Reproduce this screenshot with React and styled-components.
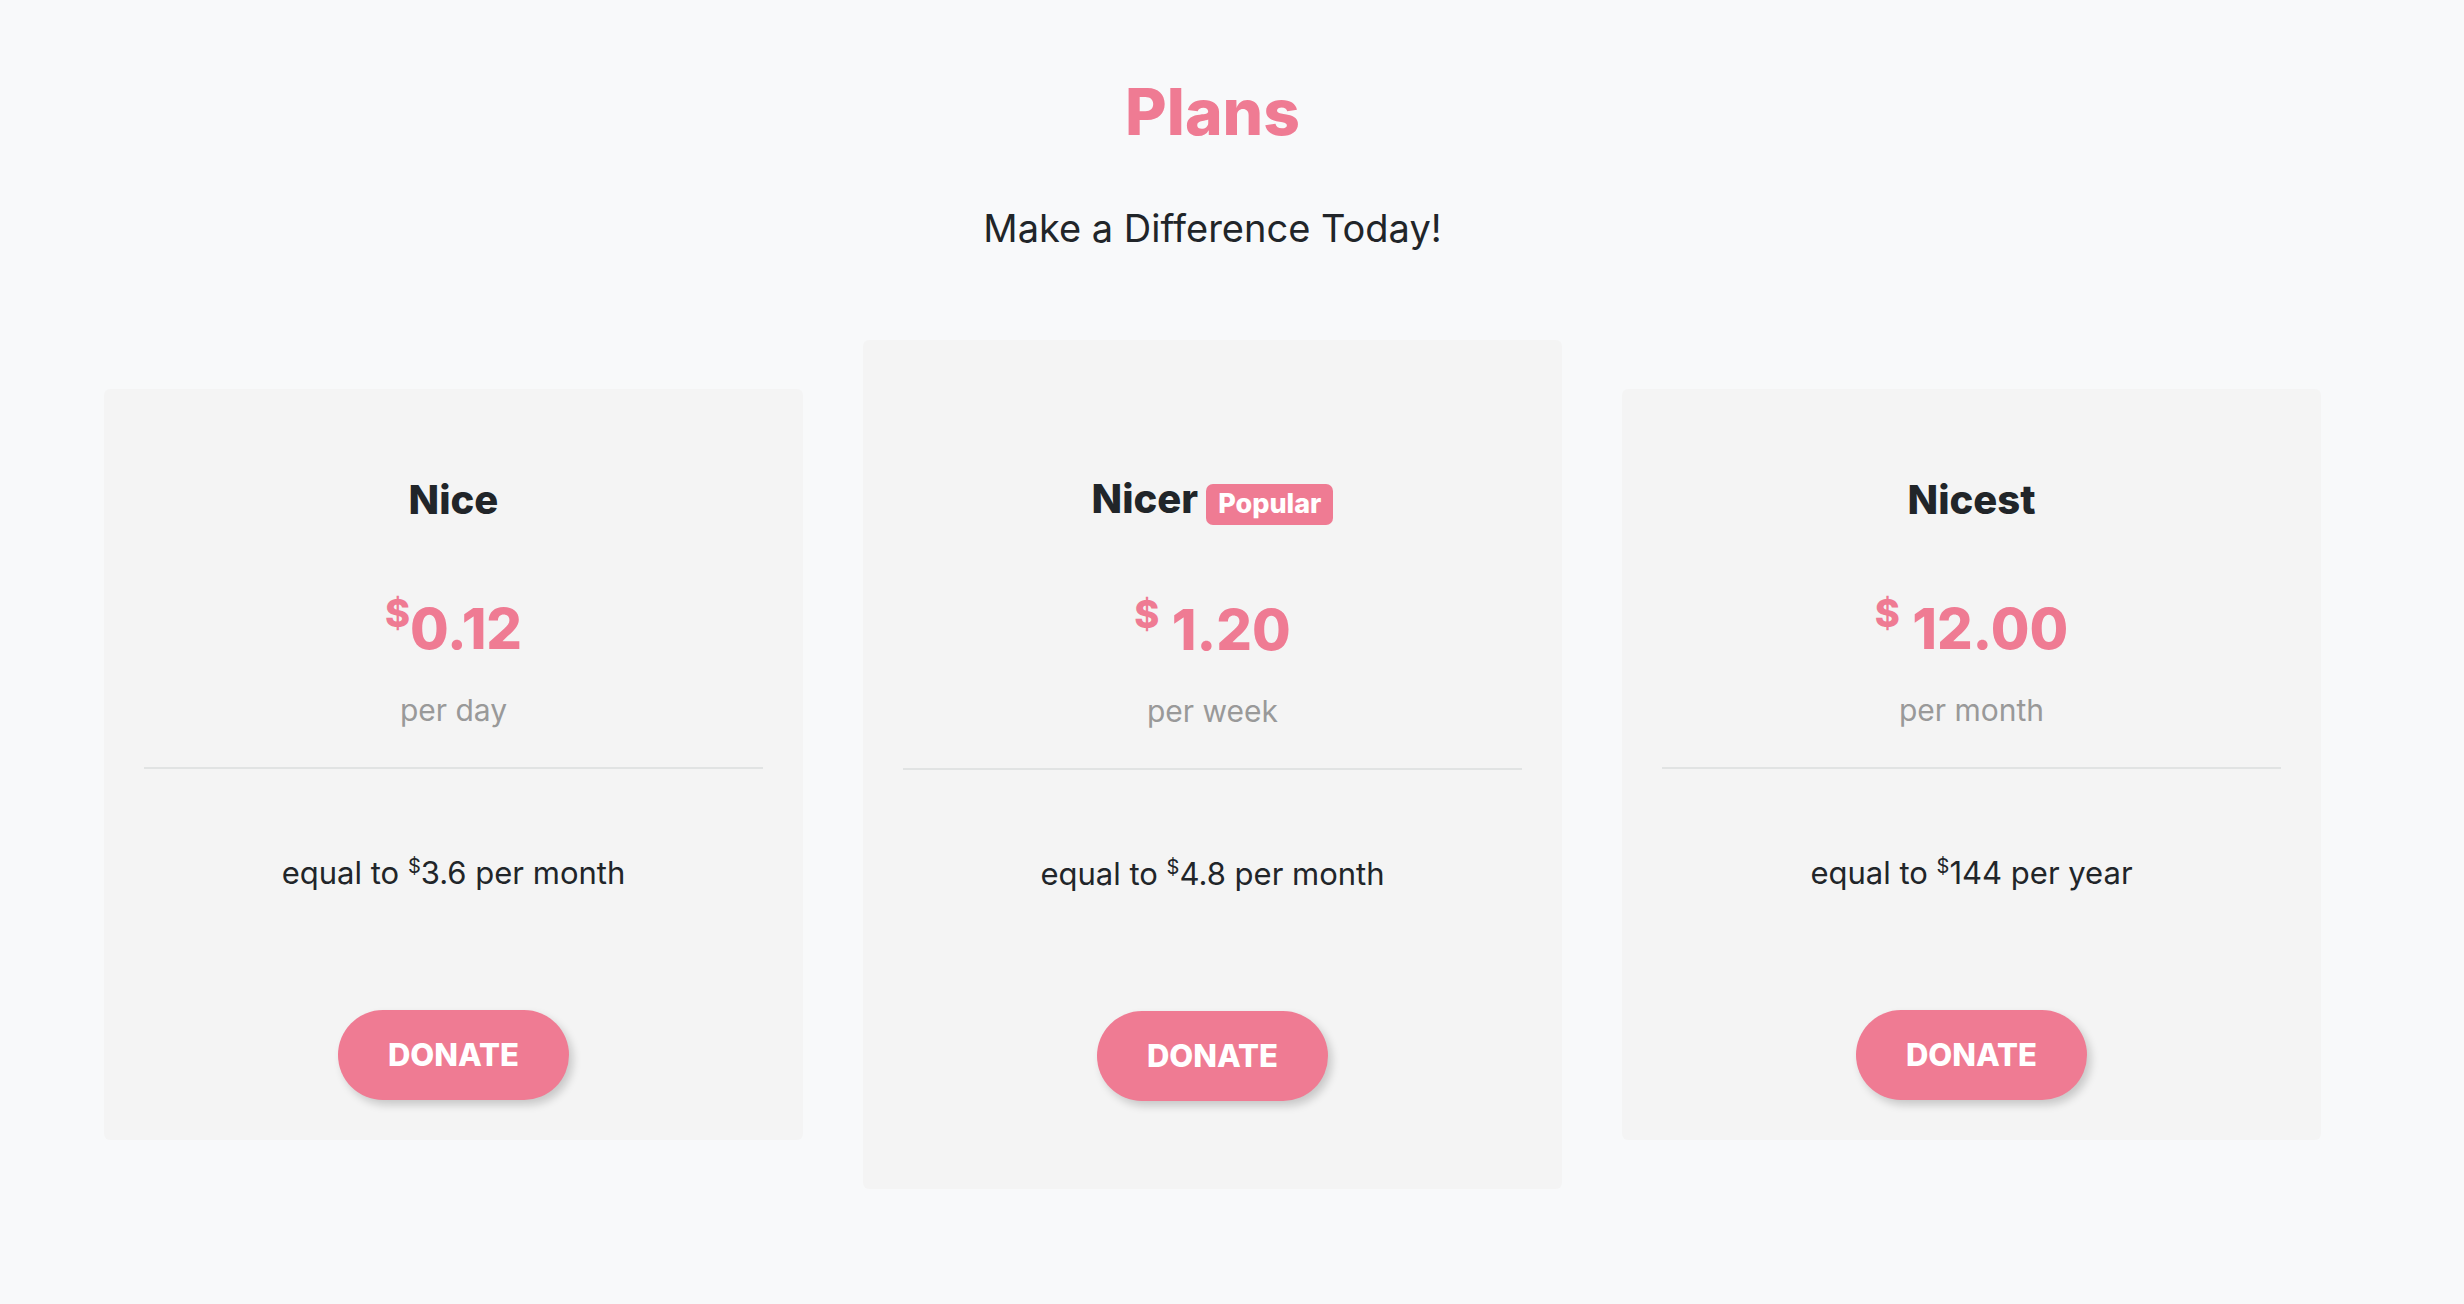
import React from 'react';
import styled, { createGlobalStyle } from 'styled-components';

const GlobalStyle = createGlobalStyle`
  * {
    box-sizing: border-box;
  }
  body {
    margin: 0;
    background: #f8f9fa;
    font-family: Inter, "Noto Sans", "Liberation Sans", sans-serif;
    color: #212529;
  }
`;

const Page = styled.div`
  padding: 74px 143px 80px 104px;
`;

const Title = styled.h1`
  margin: 0;
  text-align: center;
  font-size: 64px;
  line-height: 76.8px;
  font-weight: 800;
  color: #ef7b93;
`;

const Subtitle = styled.p`
  margin: 53px 0 0;
  text-align: center;
  font-size: 38px;
  line-height: 48px;
  font-weight: 400;
`;

const Plans = styled.div`
  display: grid;
  grid-template-columns: repeat(3, 1fr);
  gap: 60px;
  align-items: center;
  margin-top: 88px;
`;

const Card = styled.div`
  background: #f4f4f4;
  border-radius: 6px;
  text-align: center;
  padding: ${p => (p.$featured ? '135px 40px 88px' : '87px 40px 40px')};
`;

const Name = styled.h3`
  margin: 0;
  font-size: 40px;
  line-height: 48px;
  font-weight: 800;
  color: #212529;
`;

const Badge = styled.span`
  display: inline-block;
  margin-left: 8px;
  padding: 7px 12px 8px;
  border-radius: 7px;
  background: #ef7b93;
  color: #fff;
  font-size: 27px;
  line-height: 26px;
  font-weight: 800;
`;

const Price = styled.div`
  margin-top: 70px;
  font-size: 56px;
  line-height: 67px;
  font-weight: 800;
  color: #ef7b93;
`;

const Currency = styled.span`
  font-size: 38px;
  line-height: 1;
  vertical-align: 22px;
`;

const Period = styled.div`
  margin-top: 29px;
  font-size: 30px;
  line-height: 36px;
  color: #999999;
`;

const Divider = styled.hr`
  margin: 39px 0 0;
  border: 0;
  border-top: 2px solid #e1e3e3;
`;

const Equal = styled.p`
  margin: 86px 0 0;
  font-size: 31px;
  line-height: 36px;
  color: #212529;

  sup {
    font-size: 20px;
    line-height: 0;
  }
`;

const DonateButton = styled.button`
  margin-top: 119px;
  height: 90px;
  padding: 0 50px;
  border: 0;
  border-radius: 45px;
  background: #ef7b93;
  color: #fff;
  font-family: inherit;
  font-size: 31px;
  font-weight: 800;
  box-shadow: 4px 5px 8px rgba(0, 0, 0, 0.18);
  cursor: pointer;
`;

const plans = [
  { name: 'Nice', amount: '0.12', spaced: false, period: 'per day', equal: '3.6', per: 'per month' },
  { name: 'Nicer', amount: '1.20', spaced: true, period: 'per week', equal: '4.8', per: 'per month', featured: true },
  { name: 'Nicest', amount: '12.00', spaced: true, period: 'per month', equal: '144', per: 'per year' },
];

export default function App() {
  return (
    <>
      <GlobalStyle />
      <Page>
        <Title>Plans</Title>
        <Subtitle>Make a Difference Today!</Subtitle>
        <Plans>
          {plans.map(plan => (
            <Card key={plan.name} $featured={plan.featured}>
              <Name>
                {plan.name}
                {plan.featured && <Badge>Popular</Badge>}
              </Name>
              <Price>
                <Currency>$</Currency>
                {plan.spaced ? ' ' : ''}
                {plan.amount}
              </Price>
              <Period>{plan.period}</Period>
              <Divider />
              <Equal>
                equal to <sup>$</sup>{plan.equal} {plan.per}
              </Equal>
              <DonateButton>DONATE</DonateButton>
            </Card>
          ))}
        </Plans>
      </Page>
    </>
  );
}
